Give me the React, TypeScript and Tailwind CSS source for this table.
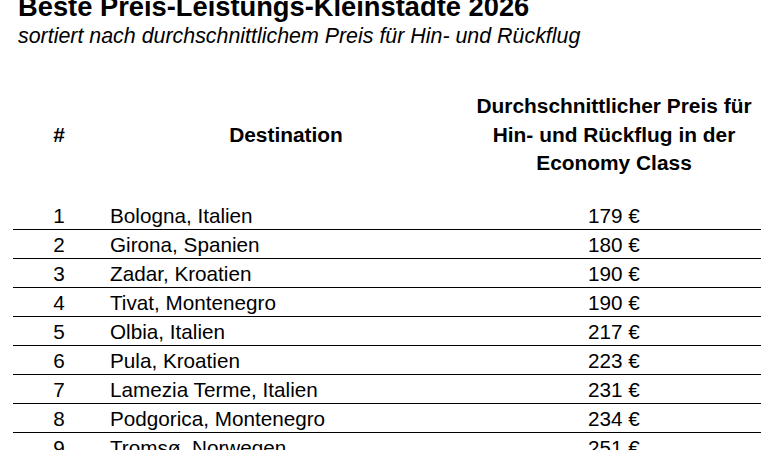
import React from "react";

// ─── Data ─────────────────────────────────────────────────────────
const rows = [
  { rank: 1, city: "Bologna, Italien", price: 179 },
  { rank: 2, city: "Girona, Spanien", price: 180 },
  { rank: 3, city: "Zadar, Kroatien", price: 190 },
  { rank: 4, city: "Tivat, Montenegro", price: 190 },
  { rank: 5, city: "Olbia, Italien", price: 217 },
  { rank: 6, city: "Pula, Kroatien", price: 223 },
  { rank: 7, city: "Lamezia Terme, Italien", price: 231 },
  { rank: 8, city: "Podgorica, Montenegro", price: 234 },
  { rank: 9, city: "Tromsø, Norwegen", price: 251 },
];

const font = { fontFamily: '"Liberation Sans", Arial, sans-serif' };

export default function App() {
  return (
    <div
      className="w-[768px] h-[450px] overflow-hidden bg-white text-black"
      style={font}
    >
      {/* Heading */}
      <div className="px-[18px]">
        <h1 className="-mt-[7px] text-[27.3px] leading-[27px] font-bold">
          Beste Preis-Leistungs-Kleinstädte 2026
        </h1>
        <p className="mt-[6px] text-[21.4px] leading-[21px] italic">
          sortiert nach durchschnittlichem Preis für Hin- und Rückflug
        </p>
      </div>

      {/* Table */}
      <div className="ml-[13px] w-[748px] mt-[45px]">
        <div className="grid grid-cols-[92px_362px_294px] items-center text-[20.9px] leading-[28.5px] font-bold">
          <div className="text-center">#</div>
          <div className="text-center">Destination</div>
          <div className="text-center">
            Durchschnittlicher Preis für
            <br />
            Hin- und Rückflug in der
            <br />
            Economy Class
          </div>
        </div>

        <div className="mt-[23px]">
          {rows.map((r) => (
            <div
              key={r.rank}
              className="grid grid-cols-[92px_362px_294px] h-[29px] pt-[2px] border-b border-black text-[20.7px] leading-[26px]"
            >
              <div className="text-center">{r.rank}</div>
              <div className="pl-[5px]">{r.city}</div>
              <div className="text-center">{r.price} €</div>
            </div>
          ))}
        </div>
      </div>
    </div>
  );
}
